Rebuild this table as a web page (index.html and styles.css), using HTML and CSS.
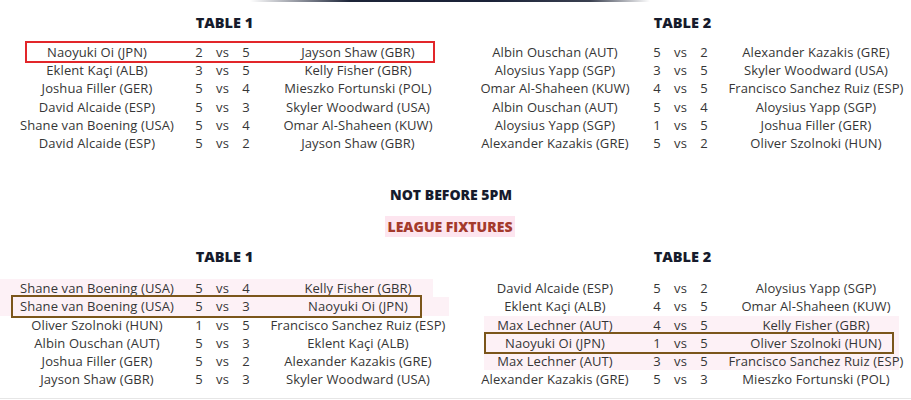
FILE: index.html
```html
<!DOCTYPE html>
<html lang="en">
<head>
<meta charset="utf-8">
<title>Fixtures</title>
<link rel="stylesheet" href="styles.css">
</head>
<body>
<div class="topbar"></div>

<section class="pair">
  <div class="col">
    <h2 class="tbl-title">TABLE 1</h2>
    <div class="rows">
      <div class="row mark mark-red"><span class="p1">Naoyuki Oi (JPN)</span><span class="s">2</span><span class="vs">vs</span><span class="s">5</span><span class="p2">Jayson Shaw (GBR)</span></div>
      <div class="row"><span class="p1">Eklent Kaçi (ALB)</span><span class="s">3</span><span class="vs">vs</span><span class="s">5</span><span class="p2">Kelly Fisher (GBR)</span></div>
      <div class="row"><span class="p1">Joshua Filler (GER)</span><span class="s">5</span><span class="vs">vs</span><span class="s">4</span><span class="p2">Mieszko Fortunski (POL)</span></div>
      <div class="row"><span class="p1">David Alcaide (ESP)</span><span class="s">5</span><span class="vs">vs</span><span class="s">3</span><span class="p2">Skyler Woodward (USA)</span></div>
      <div class="row"><span class="p1">Shane van Boening (USA)</span><span class="s">5</span><span class="vs">vs</span><span class="s">4</span><span class="p2">Omar Al-Shaheen (KUW)</span></div>
      <div class="row"><span class="p1">David Alcaide (ESP)</span><span class="s">5</span><span class="vs">vs</span><span class="s">2</span><span class="p2">Jayson Shaw (GBR)</span></div>
    </div>
  </div>
  <div class="col">
    <h2 class="tbl-title">TABLE 2</h2>
    <div class="rows">
      <div class="row"><span class="p1">Albin Ouschan (AUT)</span><span class="s">5</span><span class="vs">vs</span><span class="s">2</span><span class="p2">Alexander Kazakis (GRE)</span></div>
      <div class="row"><span class="p1">Aloysius Yapp (SGP)</span><span class="s">3</span><span class="vs">vs</span><span class="s">5</span><span class="p2">Skyler Woodward (USA)</span></div>
      <div class="row"><span class="p1">Omar Al-Shaheen (KUW)</span><span class="s">4</span><span class="vs">vs</span><span class="s">5</span><span class="p2">Francisco Sanchez Ruiz (ESP)</span></div>
      <div class="row"><span class="p1">Albin Ouschan (AUT)</span><span class="s">5</span><span class="vs">vs</span><span class="s">4</span><span class="p2">Aloysius Yapp (SGP)</span></div>
      <div class="row"><span class="p1">Aloysius Yapp (SGP)</span><span class="s">1</span><span class="vs">vs</span><span class="s">5</span><span class="p2">Joshua Filler (GER)</span></div>
      <div class="row"><span class="p1">Alexander Kazakis (GRE)</span><span class="s">5</span><span class="vs">vs</span><span class="s">2</span><span class="p2">Oliver Szolnoki (HUN)</span></div>
    </div>
  </div>
</section>

<h3 class="notbefore">NOT BEFORE 5PM</h3>
<h3 class="league"><span class="league-text">LEAGUE FIXTURES</span></h3>

<section class="pair pair-bottom">
  <div class="col">
    <h2 class="tbl-title">TABLE 1</h2>
    <div class="rows">
      <div class="row hl hl-a"><span class="p1">Shane van Boening (USA)</span><span class="s">5</span><span class="vs">vs</span><span class="s">4</span><span class="p2">Kelly Fisher (GBR)</span></div>
      <div class="row hl hl-b mark mark-brown-a"><span class="p1">Shane van Boening (USA)</span><span class="s">5</span><span class="vs">vs</span><span class="s">3</span><span class="p2">Naoyuki Oi (JPN)</span></div>
      <div class="row"><span class="p1">Oliver Szolnoki (HUN)</span><span class="s">1</span><span class="vs">vs</span><span class="s">5</span><span class="p2">Francisco Sanchez Ruiz (ESP)</span></div>
      <div class="row"><span class="p1">Albin Ouschan (AUT)</span><span class="s">5</span><span class="vs">vs</span><span class="s">3</span><span class="p2">Eklent Kaçi (ALB)</span></div>
      <div class="row"><span class="p1">Joshua Filler (GER)</span><span class="s">5</span><span class="vs">vs</span><span class="s">2</span><span class="p2">Alexander Kazakis (GRE)</span></div>
      <div class="row"><span class="p1">Jayson Shaw (GBR)</span><span class="s">5</span><span class="vs">vs</span><span class="s">3</span><span class="p2">Skyler Woodward (USA)</span></div>
    </div>
  </div>
  <div class="col">
    <h2 class="tbl-title">TABLE 2</h2>
    <div class="rows">
      <div class="row"><span class="p1">David Alcaide (ESP)</span><span class="s">5</span><span class="vs">vs</span><span class="s">2</span><span class="p2">Aloysius Yapp (SGP)</span></div>
      <div class="row"><span class="p1">Eklent Kaçi (ALB)</span><span class="s">4</span><span class="vs">vs</span><span class="s">5</span><span class="p2">Omar Al-Shaheen (KUW)</span></div>
      <div class="row hl hl-c"><span class="p1">Max Lechner (AUT)</span><span class="s">4</span><span class="vs">vs</span><span class="s">5</span><span class="p2">Kelly Fisher (GBR)</span></div>
      <div class="row hl hl-c mark mark-brown-b"><span class="p1">Naoyuki Oi (JPN)</span><span class="s">1</span><span class="vs">vs</span><span class="s">5</span><span class="p2">Oliver Szolnoki (HUN)</span></div>
      <div class="row hl hl-c"><span class="p1">Max Lechner (AUT)</span><span class="s">3</span><span class="vs">vs</span><span class="s">5</span><span class="p2">Francisco Sanchez Ruiz (ESP)</span></div>
      <div class="row"><span class="p1">Alexander Kazakis (GRE)</span><span class="s">5</span><span class="vs">vs</span><span class="s">3</span><span class="p2">Mieszko Fortunski (POL)</span></div>
    </div>
  </div>
</section>

<div class="divider"></div>
</body>
</html>
```

FILE: styles.css
```css
* { box-sizing: border-box; }

html, body {
  margin: 0;
  padding: 0;
  background: #ffffff;
}

body {
  font-family: "Open Sans", "Liberation Sans", sans-serif;
  color: #363636;
  width: 911px;
  height: 400px;
  overflow: hidden;
}

.topbar {
  height: 2px;
  margin-left: 250px;
  width: 400px;
  background: linear-gradient(to right, rgba(60,66,80,0) 0%, #1c2438 25%, #1a2238 60%, #3a4050 85%, rgba(120,125,130,0) 100%);
}

.pair {
  display: grid;
  grid-template-columns: 1fr 1fr;
  margin-top: 11px;
}

.pair-bottom {
  margin-top: 10px;
}

.col {
  display: flex;
  flex-direction: column;
}

.tbl-title {
  margin: 0;
  height: 20px;
  line-height: 20px;
  font-size: 14.5px;
  font-weight: 800;
  color: #161b2c;
  text-align: center;
  padding-right: 9px;
}

.rows {
  margin-top: 10px;
  padding-left: 17px;
  display: flex;
  flex-direction: column;
}

.pair-bottom .rows {
  margin-top: 12px;
}

.row {
  position: relative;
  display: grid;
  grid-template-columns: 170px 24px 23px 24px 200px;
  height: 18.2px;
  line-height: 18.2px;
  font-size: 13px;
  letter-spacing: 0.1px;
  white-space: nowrap;
}

.row > span {
  text-align: center;
  position: relative;
  z-index: 1;
}

.p1 { padding-right: 10px; }

.hl::before {
  content: "";
  position: absolute;
  top: 0;
  bottom: 0;
  background: #fdf1f6;
  z-index: 0;
}

.hl-a::before { left: -17px; width: 433px; }
.hl-b::before { left: -17px; width: 449px; }
.hl-c::before { left: 9px; width: 415px; }

.mark::after {
  content: "";
  position: absolute;
  top: -2px;
  bottom: -2px;
  border: 2px solid;
  z-index: 2;
}

.mark-red::after { left: 8px; width: 406px; border-color: #e2262a; }
.mark-brown-a::after { left: -6px; width: 407px; border-color: #7b561b; }
.mark-brown-b::after { left: 9px; width: 406px; border-color: #7b561b; }

.notbefore {
  margin: 33px 0 0;
  height: 20px;
  line-height: 20px;
  font-size: 14px;
  font-weight: 800;
  color: #161b2c;
  text-align: center;
  padding-right: 9px;
}

.league {
  margin: 12px 0 0;
  height: 20px;
  line-height: 20px;
  font-size: 14px;
  font-weight: 800;
  text-align: center;
  padding-right: 11px;
}

.league-text {
  color: #a43a2c;
  background: #fde5ef;
  padding: 1px 3px;
}

.divider {
  margin-top: 10px;
  height: 1px;
  background: #e6e6e6;
}
```
